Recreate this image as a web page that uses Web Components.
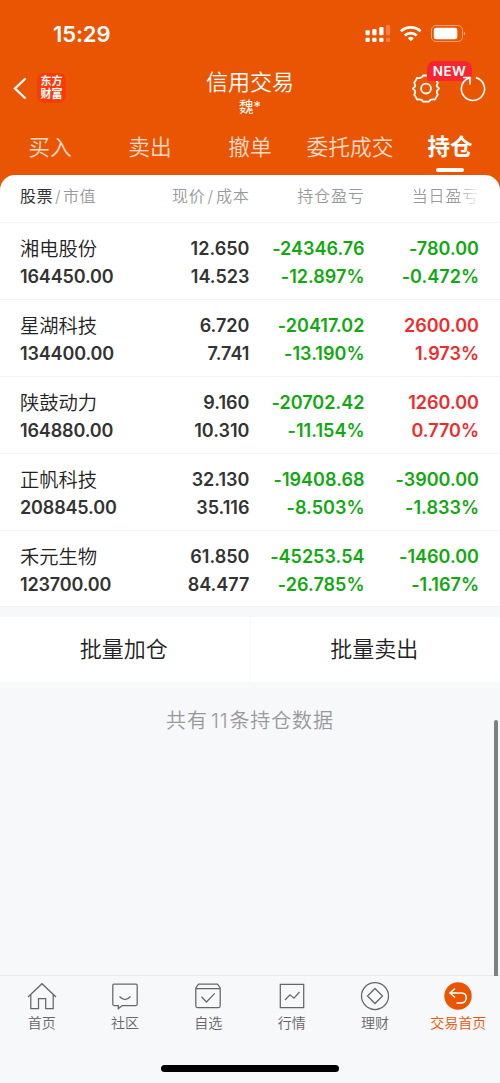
<!DOCTYPE html>
<html lang="zh-CN">
<head>
<meta charset="utf-8">
<meta name="viewport" content="width=device-width">
<title>信用交易</title>
<style>
html,body{margin:0;height:100%;overflow:hidden}
body{font-family:Inter,"Noto Sans CJK SC",sans-serif;color:#333;background:#f7f8fa}
</style>
</head>
<body>
<trade-app></trade-app>
<script>
const define = (name, html, setup) => {
  const t = document.createElement('template');
  t.innerHTML = html;
  customElements.define(name, class extends HTMLElement {
    constructor() {
      super();
      this.attachShadow({mode:'open'}).append(t.content.cloneNode(true));
    }
    connectedCallback() { if (setup) setup(this, this.shadowRoot); }
  });
};

define('status-bar', `
<style>
:host{display:flex;height:60px;box-sizing:border-box;padding:22px 34px 0 53px;justify-content:space-between;color:#fff}
time{font-size:22px;font-weight:600;line-height:24px;letter-spacing:-.1px}
svg{display:block;width:102px;height:24px}
</style>
<time>15:29</time>
<svg viewBox="0 0 102 24" fill="#fff">
<rect x="1.500" y="8.200" width="4.200" height="5" rx="1"/><rect x="8.300" y="7" width="4.200" height="6.200" rx="1"/><rect x="15.300" y="5" width="4.200" height="8.200" rx="1"/><rect x="22" y="3" width="4.200" height="10.200" rx="1" opacity=".25"/>
<rect x="1.500" y="15.700" width="4.200" height="4.300" rx="1"/><rect x="8.300" y="15.700" width="4.200" height="4.300" rx="1"/><rect x="15.300" y="15.700" width="4.200" height="4.300" rx="1"/><rect x="22" y="15.700" width="4.200" height="4.300" rx="1" opacity=".25"/>
<path d="M46.800 19.300l-3-3.100a4.400 4.400 0 0 1 6 0z"/><g fill="none" stroke="#fff" stroke-width="2.700"><path d="M40.800 13.500a8.700 8.700 0 0 1 12 0M37 9.300a14.400 14.400 0 0 1 19.600 0"/></g>
<rect x="67.500" y="3.500" width="31" height="16" rx="4.500" fill="none" stroke="#fff" stroke-opacity=".45"/><rect x="69.800" y="5.700" width="23.500" height="11.600" rx="2.300"/><path d="M99.800 9.500c2 .7 2 3.300 0 4z" opacity=".5"/>
</svg>`);

define('nav-header', `
<style>
:host{display:grid;grid-template-columns:120px 1fr 120px;height:60px;color:#fff}
.left{display:flex;align-items:center;padding:0 0 4px 13px}
.left svg{width:14px;height:24px}
.logo{width:29px;height:30px;margin-left:10px;border-radius:7px;background:#fa3b08;font:700 11px/13px "Liberation Sans","Noto Sans CJK SC",sans-serif;text-align:center;box-sizing:border-box;padding-top:2px}
.logo span{display:block;height:13px}
.title{text-align:center;padding-top:7px}
h1{margin:0;font-size:22px;font-weight:350;line-height:31px}
small{display:block;font-size:14.500px;line-height:17px}
.right{position:relative;display:flex;padding:13px 0 0 31px;gap:18px}
.right svg{width:30px;height:30px;overflow:visible}
.right svg+div+svg{position:relative;z-index:2;width:28px}
.new{position:absolute;z-index:1;left:47px;top:1px;width:45px;height:20px;border-radius:8px 8px 8px 2px;background:#f52532;font-size:13.500px;font-weight:600;line-height:20px;text-align:center;letter-spacing:.5px}
</style>
<div class="left"><svg viewBox="0 0 14 24" fill="none" stroke="#fff" stroke-width="2.300"><path d="M12.500 2.500 2 12.500l10.500 10"/></svg><div class="logo"><span>东方</span><span>财富</span></div></div>
<div class="title"><h1>信用交易</h1><small>魏*</small></div>
<div class="right">
<svg viewBox="0 0 30 30" fill="none" stroke="#fff" stroke-width="1.800" stroke-linejoin="round"><path d="M9.800 4.600Q11.600 4 12.100 2.500H17.900Q18.400 4 20.200 4.700Q22 5.500 23.800 4.800L26.800 10Q25.600 11.500 25.800 13Q26.200 14.300 28.200 15.500Q26.200 17 25.800 18.500Q25.600 20 26.800 21.500L23.800 26.600Q22 26 20.200 26.700Q18.400 27.400 17.900 28.700H12.100Q11.600 27.400 9.800 26.700Q8 26 6.200 26.600L3.200 21.500Q4.400 20 4.200 18.500Q3.800 17 1.800 15.500Q3.800 14.300 4.200 13Q4.400 11.500 3.200 10L6.200 4.800Q8 5.500 9.800 4.600Z"/><circle cx="15" cy="15.600" r="4.900"/></svg>
<div class="new">NEW</div>
<svg viewBox="0 0 28 30" fill="none" stroke="#fff" stroke-width="1.600"><path d="M16.800 4.600a11.600 11.600 0 1 1-6.700.3M4 4.500h7v7"/></svg>
</div>`);

define('trade-tabs', `
<style>
:host{display:grid;grid-template-columns:repeat(5,1fr);height:55px;color:rgba(255,255,255,.8);font-size:21.700px;font-weight:350}
span{text-align:center;line-height:54px;white-space:nowrap;position:relative}
.on{color:#fff;font-weight:700;font-size:22.500px}
.on::after{content:"";position:absolute;left:36px;top:48px;width:28px;height:4px;border-radius:2px;background:#fff}
</style>
<span>买入</span><span>卖出</span><span>撤单</span><span>委托成交</span><span class="on">持仓</span>`);

define('holding-head', `
<style>
:host{display:grid;grid-template-columns:130px 99.500px 115px 114.500px;padding-left:20px;height:48px;box-sizing:border-box;border-bottom:1px solid #f4f4f6;line-height:42px;font-size:16px;letter-spacing:.8px;color:#999;font-weight:350;white-space:nowrap}
span{text-align:right}span:first-of-type{text-align:left;letter-spacing:.5px}b{font-weight:400;color:#333}
i{font-style:normal;padding:0 2px}
.fade{background:linear-gradient(90deg,#999 80%,#eee 98%);-webkit-background-clip:text;color:transparent}
</style><span><b>股票</b><i>/</i>市值</span><span>现价<i>/</i>成本</span><span>持仓盈亏</span><span class="fade">当日盈亏</span>`);

define('holding-row', `
<style>
:host{display:grid;grid-template-columns:130px 99.500px 115px 114.500px;padding:12px 0 0 20px;height:76.900px;box-sizing:border-box;border-bottom:1px solid #f4f4f6;background:#fff;font-size:18px;font-weight:600;line-height:28px;letter-spacing:.02px;white-space:nowrap}
div{text-align:right}div:first-of-type{text-align:left;letter-spacing:-.15px}
span{display:block;height:28px}.name{font-size:19.300px;font-weight:350;letter-spacing:0;color:#222}
.down{color:#11a811}.up{color:#f02b2b}
</style>`, (el, root) => {
  const d = el.getAttribute('values').split(' ');
  for (let i = 0; i < 4; i++) {
    const cell = document.createElement('div');
    const tone = i < 2 ? '' : d[i*2].startsWith('-') ? 'down' : 'up';
    cell.className = tone;
    [d[i*2], d[i*2+1]].forEach((v, j) => {
      const s = document.createElement('span');
      s.textContent = v;
      if (!i && !j) s.className = 'name';
      cell.append(s);
    });
    root.append(cell);
  }
});

define('batch-actions', `
<style>:host{display:grid;grid-template-columns:1fr 1fr;gap:1px;margin-top:10px;height:64px;font-size:22px;font-weight:350;line-height:65px;text-align:center;color:#222}
span{background:#fff;padding-right:2px}</style><span>批量加仓</span><span>批量卖出</span>`);

define('tab-item', `
<style>:host{display:flex;flex-direction:column;align-items:center;font-size:14px;line-height:20px;color:#666;font-weight:350;white-space:nowrap}
:host([active]){color:#ea5504}
::slotted(svg){width:30px;height:30px;margin-bottom:2px}</style><slot name="icon"></slot><slot></slot>`);

define('bottom-bar', `
<style>:host{display:block;height:108px;box-sizing:border-box;border-top:1.500px solid #e9eaed;background:#f7f8fa}
nav{display:grid;grid-template-columns:repeat(6,1fr);padding-top:5px;height:85px;box-sizing:border-box}
svg{fill:none;stroke:#666;stroke-width:1.250}
.home{width:178px;height:7px;border-radius:4px;background:#000;margin:4px auto 0}</style>
<nav>
<tab-item><svg slot="icon" viewBox="0 0 30 30"><path d="M1 16 15 2.700 29 16M3.800 13.500V27.500H11.500V17.500H18.700V27.500H26.200V13.500"/></svg>首页</tab-item>
<tab-item><svg slot="icon" viewBox="0 0 30 30"><path d="M4 3.200H26Q27.200 3.200 27.200 4.400V23.300Q27.200 24.500 26 24.500H12.300L8.300 27.600V24.500H4Q2.800 24.500 2.800 23.300V4.400Q2.800 3.200 4 3.200ZM9.500 15.500Q15 21.500 20.500 15.500"/></svg>社区</tab-item>
<tab-item><svg slot="icon" viewBox="0 0 30 30"><path d="M5.500 3.200H24.500L27.200 7V25Q27.200 26.500 25.700 26.500H4.300Q2.800 26.500 2.800 25V7ZM2.800 7.500H27.200M8.500 15.800 13.500 21 21.700 12.400"/></svg>自选</tab-item>
<tab-item><svg slot="icon" viewBox="0 0 30 30"><path d="M3.300 3.300H26.700V26.500H3.300ZM8 19 13 13.800 17 17.200 22.500 11"/></svg>行情</tab-item>
<tab-item><svg slot="icon" viewBox="0 0 30 30"><circle cx="15" cy="15" r="13.500"/><path d="M15 7.500 22.500 15 15 22.500 7.500 15Z"/></svg>理财</tab-item>
<tab-item active><svg slot="icon" viewBox="0 0 30 30"><circle cx="15" cy="15" r="13.700" fill="#ea5504" stroke="none"/><path d="M12 7.500 7 12 12 16.500M7.500 12H18.500Q23.300 12.300 23.300 17 23 21.500 18.500 22H13.500" stroke="#fff" stroke-width="1.500"/></svg>交易首页</tab-item>
</nav><div class="home"></div>`);

define('trade-app', `
<style>
:host{display:flex;flex-direction:column;height:1083px;background:#f7f8fa;position:relative}
header{background:#ea5504;height:195px;margin-bottom:-20px;box-sizing:border-box}
main{flex:1;min-height:0}
.sheet{background:#fff;border-radius:15px 15px 0 0;overflow:hidden}
p{margin:0;text-align:center;font-size:20px;font-weight:350;line-height:28px;padding-top:25.500px;letter-spacing:.9px;color:#999}
p span{padding:0 1px 0 3px}
.scroll{position:absolute;right:2px;top:720px;width:4px;height:256px;border-radius:2px 2px 0 0;background:#7e7f80}
</style>
<header><status-bar></status-bar><nav-header></nav-header><trade-tabs></trade-tabs></header>
<main><div class="sheet"><holding-head></holding-head>
<holding-row values="湘电股份 164450.00 12.650 14.523 -24346.76 -12.897% -780.00 -0.472%"></holding-row>
<holding-row values="星湖科技 134400.00 6.720 7.741 -20417.02 -13.190% 2600.00 1.973%"></holding-row>
<holding-row values="陕鼓动力 164880.00 9.160 10.310 -20702.42 -11.154% 1260.00 0.770%"></holding-row>
<holding-row values="正帆科技 208845.00 32.130 35.116 -19408.68 -8.503% -3900.00 -1.833%"></holding-row>
<holding-row values="禾元生物 123700.00 61.850 84.477 -45253.54 -26.785% -1460.00 -1.167%"></holding-row></div>
<batch-actions></batch-actions><p>共有<span>11</span>条持仓数据</p></main>
<bottom-bar></bottom-bar><div class="scroll"></div>`);
</script>
</body>
</html>
